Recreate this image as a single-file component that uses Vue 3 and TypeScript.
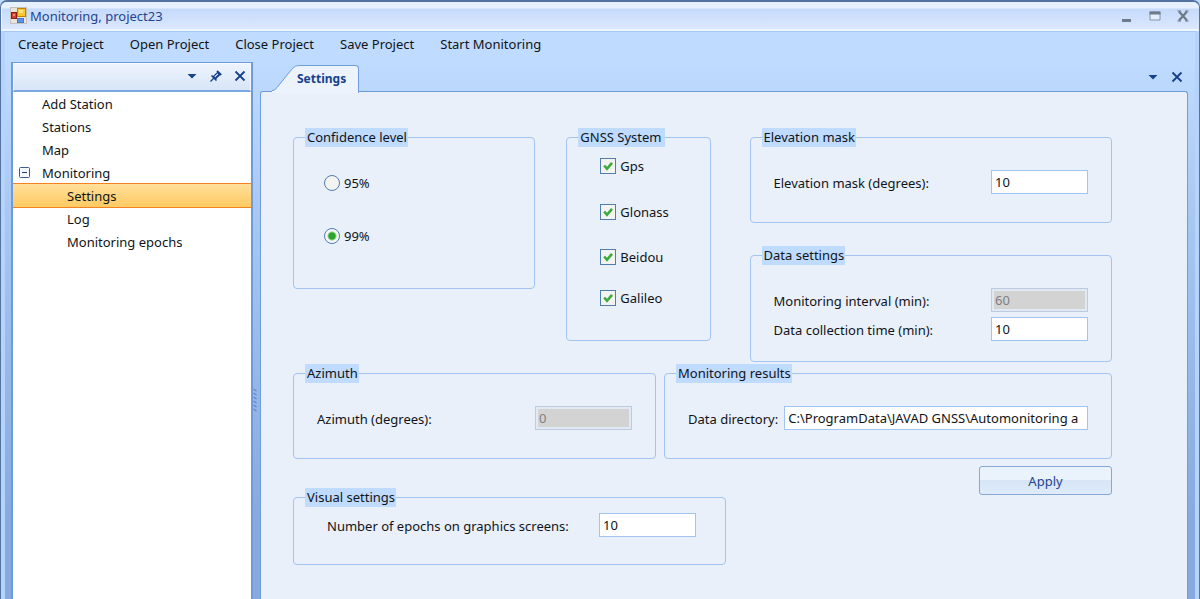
<script setup lang="ts">
import { ref } from 'vue'

const menu: string[] = ['Create Project', 'Open Project', 'Close Project', 'Save Project', 'Start Monitoring']

interface TreeItem {
  label: string
  child?: boolean
  open?: boolean
}
const tree: TreeItem[] = [
  { label: 'Add Station' },
  { label: 'Stations' },
  { label: 'Map' },
  { label: 'Monitoring', open: true },
  { label: 'Settings', child: true },
  { label: 'Log', child: true },
  { label: 'Monitoring epochs', child: true },
]
const active = ref('Settings')

const levels: string[] = ['95%', '99%']
const level = ref('99%')

const systems = ref([
  { name: 'Gps', on: true },
  { name: 'Glonass', on: true },
  { name: 'Beidou', on: true },
  { name: 'Galileo', on: true },
])

const elevation = ref('10')
const interval = ref('60')
const collection = ref('10')
const azimuth = ref('0')
const directory = ref('C:\\ProgramData\\JAVAD GNSS\\Automonitoring a')
const epochs = ref('10')
</script>

<template>
  <div class="window">
    <header class="titlebar">
      <svg class="logo" width="17" height="17" viewBox="0 0 17 17" aria-hidden="true">
        <rect x="0.5" y="0.5" width="16" height="16" fill="#e6e4dc" stroke="#c4c2ba" />
        <rect x="7.5" y="1.5" width="8" height="8" fill="#fbc92e" stroke="#b98412" />
        <rect x="9" y="3" width="4" height="3" fill="#ffe58a" />
        <rect x="1.5" y="5.5" width="5" height="6" fill="#d0402c" stroke="#8e1c10" />
        <rect x="3" y="7" width="2" height="2" fill="#f08a70" />
        <rect x="7.5" y="11.5" width="6" height="4" fill="#5b93ea" stroke="#4379d6" />
      </svg>
      <h1>Monitoring, project23</h1>
      <div class="window-buttons">
        <button type="button" aria-label="Minimize">
          <svg width="12" height="12" viewBox="0 0 12 12"><rect x="1" y="9" width="9" height="3" fill="#6f7b8d" /></svg>
        </button>
        <button type="button" aria-label="Maximize">
          <svg width="12" height="12" viewBox="0 0 12 12">
            <path d="M1 2h10v8H1z" fill="#e4eefc" stroke="#8793a5" />
            <rect x="0.5" y="1.5" width="11" height="3" fill="#6f7b8d" />
          </svg>
        </button>
        <button type="button" aria-label="Close">
          <svg width="12" height="12" viewBox="0 0 12 12">
            <path d="M2 1.5l8 9M10 1.5l-8 9" stroke="#6f7886" stroke-width="2.2" />
            <path d="M0.5 1h3.5M8 1h3.5M0.5 11h3.5M8 11h3.5" stroke="#6f7886" />
          </svg>
        </button>
      </div>
    </header>

    <nav class="menu">
      <button v-for="item in menu" :key="item" type="button">{{ item }}</button>
    </nav>

    <div class="body">
      <aside class="sidebar">
        <div class="side-head">
          <button type="button" aria-label="Panel menu">
            <svg width="12" height="12" viewBox="0 0 12 12"><path d="M1.5 4h9L6 8.5z" fill="#15428b" /></svg>
          </button>
          <button type="button" aria-label="Pin panel">
            <svg width="12" height="12" viewBox="0 0 12 12" fill="none" stroke="#15428b">
              <path d="M0.5 11.5L4 8" stroke-width="1.3" />
              <path d="M1.5 5.5L6.5 10.5" stroke-width="1.6" />
              <path d="M3.5 6.5L7.5 2.5L9.7 4.7L5.7 8.7z" fill="#eaf2fc" stroke-width="1.2" />
              <path d="M5.5 8L9.2 4.4" stroke-width="1.5" />
              <path d="M7 0.8L11.2 5" stroke-width="1.8" />
            </svg>
          </button>
          <button type="button" aria-label="Close panel">
            <svg width="12" height="12" viewBox="0 0 12 12"><path d="M1.5 1.5l9 9M10.5 1.5l-9 9" stroke="#15428b" stroke-width="1.8" /></svg>
          </button>
        </div>
        <ul class="tree">
          <li v-for="item in tree" :key="item.label">
            <button
              type="button"
              class="node"
              :class="{ child: item.child, active: item.label === active }"
              @click="active = item.label"
            >
              <svg v-if="item.open" class="toggle" width="12" height="12" viewBox="0 0 12 12" aria-hidden="true">
                <rect x="0.5" y="0.5" width="10" height="10" rx="1" fill="#f4f8fe" stroke="#3d5c8e" />
                <path d="M3 5.5h5" stroke="#1d3f78" />
              </svg>
              {{ item.label }}
            </button>
          </li>
        </ul>
      </aside>

      <div class="splitter">
        <svg width="5" height="24" viewBox="0 0 5 24" aria-hidden="true">
          <path
            v-for="n in 6"
            :key="n"
            :d="`M0.5 ${n * 4 - 3}l3 2`"
            stroke="#5b8ad4"
            stroke-width="1.2"
          />
        </svg>
      </div>

      <main class="content">
        <div class="tabs">
          <button type="button" class="tab">
            <svg class="tab-slope" width="28" height="28" viewBox="0 0 28 28" aria-hidden="true">
              <path d="M0 26C3 26 3 25 5 23L20 4C22.5 1.5 24 0.5 28 0.5V28H0z" fill="#ecf3fc" />
              <path d="M0 25.5C2 25.5 3 24.5 5 22.5L20 4C22.5 1.5 24 0.5 28 0.5" fill="none" stroke="#6f9dd9" />
            </svg>
            <span class="tab-label"><span class="tab-text">Settings</span></span>
          </button>
          <div class="tab-tools">
            <button type="button" aria-label="Tab list">
              <svg width="12" height="12" viewBox="0 0 12 12"><path d="M1.5 4h9L6 8.5z" fill="#15428b" /></svg>
            </button>
            <button type="button" aria-label="Close tab">
              <svg width="12" height="12" viewBox="0 0 12 12"><path d="M1.5 1.5l9 9M10.5 1.5l-9 9" stroke="#15428b" stroke-width="1.8" /></svg>
            </button>
          </div>
        </div>

        <form class="panel" @submit.prevent>
          <div class="row top">
            <fieldset>
              <legend>Confidence level</legend>
              <div class="radios">
                <label v-for="item in levels" :key="item" class="choice">
                  <input v-model="level" type="radio" name="level" :value="item" />{{ item }}
                </label>
              </div>
            </fieldset>

            <fieldset>
              <legend class="roomy">GNSS System</legend>
              <div class="checks">
                <label v-for="item in systems" :key="item.name" class="choice">
                  <span class="box">
                    <input v-model="item.on" type="checkbox" />
                    <svg v-if="item.on" width="10" height="10" viewBox="0 0 10 10" aria-hidden="true">
                      <path d="M1.2 4.5L4 7.8L9 1.8" fill="none" stroke="#3cab3c" stroke-width="2.6" />
                    </svg>
                  </span>
                  {{ item.name }}
                </label>
              </div>
            </fieldset>

            <div class="stack">
              <fieldset>
                <legend>Elevation mask</legend>
                <div class="fields">
                  <div class="field">
                    <label for="elevation">Elevation mask (degrees):</label>
                    <input id="elevation" v-model="elevation" type="text" />
                  </div>
                </div>
              </fieldset>
              <fieldset>
                <legend>Data settings</legend>
                <div class="fields double">
                  <div class="field">
                    <label for="interval">Monitoring interval (min):</label>
                    <input id="interval" v-model="interval" type="text" disabled />
                  </div>
                  <div class="field">
                    <label for="collection">Data collection time (min):</label>
                    <input id="collection" v-model="collection" type="text" />
                  </div>
                </div>
              </fieldset>
            </div>
          </div>

          <div class="row middle">
            <fieldset>
              <legend>Azimuth</legend>
              <div class="fields">
                <div class="field">
                  <label for="azimuth">Azimuth (degrees):</label>
                  <input id="azimuth" v-model="azimuth" type="text" disabled />
                </div>
              </div>
            </fieldset>
            <fieldset>
              <legend>Monitoring results</legend>
              <div class="fields">
                <div class="field wide">
                  <label for="directory">Data directory:</label>
                  <input id="directory" v-model="directory" type="text" />
                </div>
              </div>
            </fieldset>
          </div>

          <div class="row bottom">
            <fieldset class="visual">
              <legend>Visual settings</legend>
              <div class="fields compact">
                <div class="field">
                  <label for="epochs">Number of epochs on graphics screens:</label>
                  <input id="epochs" v-model="epochs" type="text" />
                </div>
              </div>
            </fieldset>
            <button type="submit" class="apply">Apply</button>
          </div>
        </form>
      </main>
    </div>
  </div>
</template>

<style>
body {
  margin: 0;
  background: #bfdbff;
}
</style>

<style scoped>
* {
  box-sizing: border-box;
}
.window {
  display: flex;
  flex-direction: column;
  min-height: 100vh;
  padding: 0 3px;
  background: linear-gradient(#bfdbff 60px, #a9c9f4 200px, #86aadf 520px);
  border: solid #54749f;
  border-width: 2px 1px 0;
  border-radius: 7px 7px 0 0;
  box-shadow: inset 4px 0 0 #b6d4fb, inset -4px 0 0 #b6d4fb;
  color: #101418;
  font: 13px/18px "Noto Sans", "Open Sans", sans-serif;
}
button {
  padding: 0;
  border: 0;
  background: none;
  color: inherit;
  font: inherit;
}
svg {
  display: block;
}
.titlebar {
  display: flex;
  align-items: center;
  height: 29px;
  margin: 0 -3px;
  padding: 0 10px 0 8px;
  background: linear-gradient(#e6f0ff 6px, #c5dafb 7px, #dae7fd 26px);
  border: solid #eef5ff;
  border-width: 0 0 2px 1px;
  border-radius: 6px 6px 0 0;
}
.titlebar h1 {
  margin: 0 auto 0 3px;
  color: #1f4590;
  font-size: 13px;
  font-weight: 400;
}
.window-buttons {
  display: flex;
  gap: 16px;
}
.menu {
  display: flex;
  gap: 26px;
  height: 31px;
  padding: 3px 14px 10px;
  border-top: 1px solid #a6c8f3;
}
.body {
  display: flex;
  flex: 1;
  padding: 0 8px 0 7px;
}
.sidebar {
  display: flex;
  flex-direction: column;
  width: 242px;
  border: solid #6f9bdc;
  border-width: 1px 2px 0;
  background: #fff;
}
.side-head {
  display: flex;
  justify-content: flex-end;
  align-items: center;
  gap: 12px;
  height: 29px;
  padding: 0 4px 2px;
  background: linear-gradient(#eef4fd, #d7e5f7);
  border: 1px solid #f6faff;
  border-bottom: 2px solid #7ba6e2;
}
.tree {
  margin: 0;
  padding: 0;
  list-style: none;
}
.node {
  display: flex;
  align-items: center;
  width: 100%;
  height: 23px;
  padding-left: 29px;
  text-align: left;
}
.child {
  padding-left: 54px;
}
.active {
  height: 25px;
  margin: -1px 0;
  border: solid #f58220;
  border-width: 1px 0;
  background: linear-gradient(#ffdf9a, #ffca62);
}
.tree li {
  display: flow-root;
  height: 23px;
}
.toggle {
  margin: 0 11px 0 -23px;
}
.splitter {
  display: flex;
  align-items: center;
  width: 7px;
  padding-top: 138px;
}
.content {
  display: flex;
  flex: 1;
  flex-direction: column;
  min-width: 0;
}
.tabs {
  display: flex;
  justify-content: space-between;
  height: 29px;
  padding: 3px 5px 0 12px;
}
.tab {
  display: flex;
  z-index: 1;
  height: 27px;
}
.tab-slope {
  height: 28px;
}
.tab-label {
  height: 28px;
  padding: 4px 12px 0 0;
  background: #ecf3fc;
  border: solid #6f9dd9;
  border-width: 1px 1px 0 0;
  border-radius: 0 4px 0 0;
  color: #15428b;
  font-weight: 700;
  font-size: 12px;
}
.tab-text {
  margin-left: -3px;
}
.tab-tools {
  display: flex;
  align-items: center;
  gap: 12px;
  padding-bottom: 2px;
}
.panel {
  flex: 1;
  padding: 36px 75px 32px 32px;
  border: solid #6f9dd9;
  border-width: 1px 1px 0;
  border-radius: 3px 3px 0 0;
  background: #e9f0fa;
}
.row {
  display: grid;
  align-items: start;
}
.top {
  grid-template-columns: 242fr 144fr 370fr;
  column-gap: 31px;
}
.stack {
  display: grid;
  gap: 23px;
  margin-left: 8px;
}
.middle {
  grid-template-columns: 363fr 448fr;
  column-gap: 8px;
  margin-top: 2px;
}
.bottom {
  grid-template-columns: 433fr 133fr;
  column-gap: 253px;
  margin-top: 7px;
}
.visual {
  margin-top: 22px;
}
fieldset {
  min-width: 0;
  margin: 0;
  padding: 0 0 0 11px;
  border: 1px solid #a2c4f0;
  border-radius: 4px;
}
legend {
  height: 19px;
  padding: 0 1px 0 2px;
  background: #bfdbff;
}
.roomy {
  padding-right: 3px;
}
.radios {
  display: grid;
  gap: 35px;
  padding: 27px 0 43px 19px;
}
.checks {
  display: grid;
  grid-template-rows: 46px 45px 41px 18px;
  padding: 10px 0 33px 22px;
}
.choice {
  display: flex;
  align-items: center;
  gap: 4px;
  height: 18px;
}
.choice input {
  appearance: none;
  width: 16px;
  height: 16px;
  margin: 0;
  border: 1px solid #4f7fb0;
  background: #f3f3f1;
}
.choice input[type='radio'] {
  border-radius: 50%;
}
.choice input[type='radio']:checked {
  background: radial-gradient(circle, #2aa52a 3px, #f5f8f4 5px);
}
.box {
  display: grid;
}
.box > * {
  grid-area: 1 / 1;
  place-self: center;
}
.box > svg {
  pointer-events: none;
}
.fields {
  display: grid;
  gap: 5px;
  padding: 23px 23px 28px 12px;
}
.double {
  padding-bottom: 20px;
}
.compact {
  padding: 6px 29px 27px 22px;
}
.field {
  display: flex;
  align-items: center;
  justify-content: space-between;
  gap: 6px;
  white-space: nowrap;
}
.field label {
  padding-top: 2px;
}
.field input {
  width: 97px;
  height: 24px;
  padding: 0 3px;
  border: 1px solid #a2c4f0;
  border-radius: 0;
  background: #fff;
  color: inherit;
  font: inherit;
}
.field input:disabled {
  border-color: #bccbdd;
  background: #d3d3d3;
  box-shadow: inset 0 0 0 2px #e0e9f4;
  color: #808080;
}
.wide input {
  flex: 1;
  min-width: 0;
}
.apply {
  height: 29px;
  border: 1px solid #86a8d4;
  border-radius: 3px;
  background: linear-gradient(#eaf2fc 50%, #d6e5f7 50%, #dfebfa);
  color: #1f4590;
}
</style>
